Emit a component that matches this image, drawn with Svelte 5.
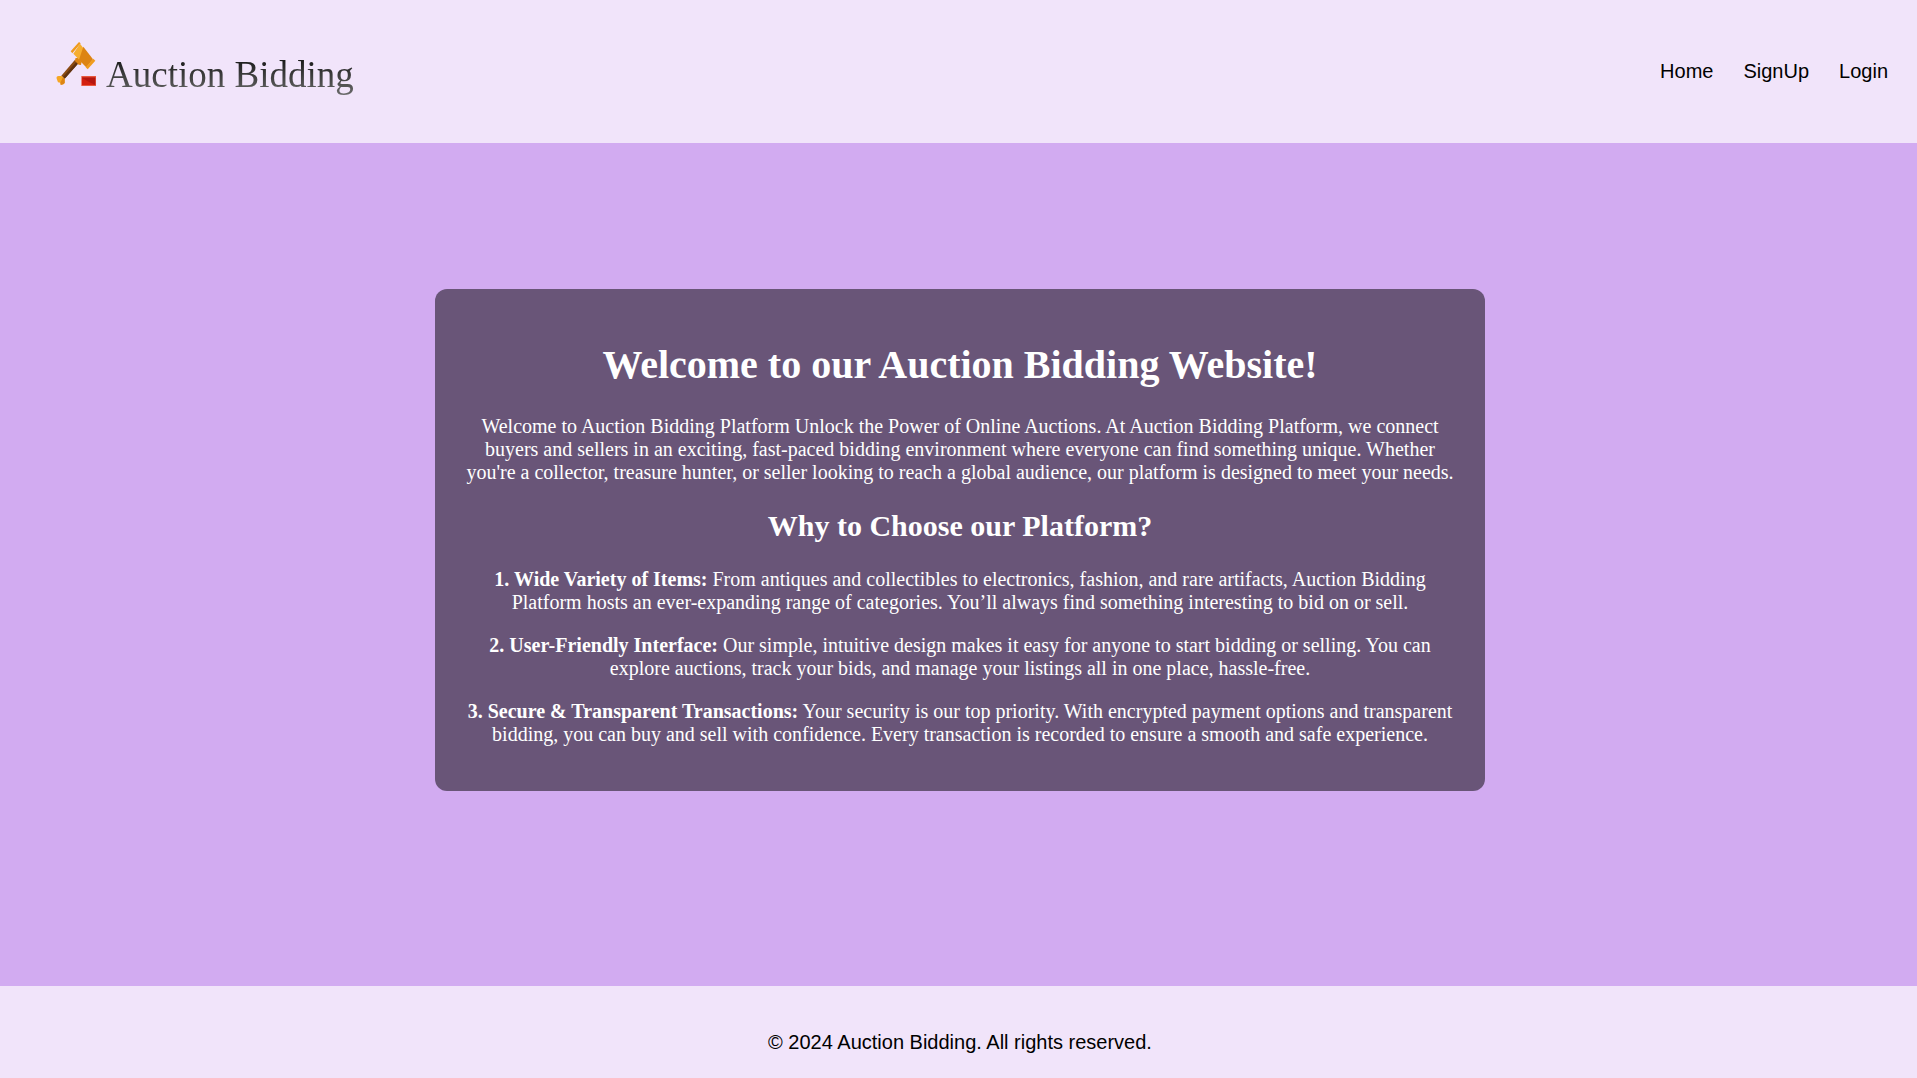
<script>
  const links = [
    { label: 'Home', href: '#home' },
    { label: 'SignUp', href: '#signup' },
    { label: 'Login', href: '#login' }
  ];

  const reasons = [
    {
      title: '1. Wide Variety of Items:',
      text: 'From antiques and collectibles to electronics, fashion, and rare artifacts, Auction Bidding Platform hosts an ever-expanding range of categories. You’ll always find something interesting to bid on or sell.'
    },
    {
      title: '2. User-Friendly Interface:',
      text: 'Our simple, intuitive design makes it easy for anyone to start bidding or selling. You can explore auctions, track your bids, and manage your listings all in one place, hassle-free.'
    },
    {
      title: '3. Secure & Transparent Transactions:',
      text: 'Your security is our top priority. With encrypted payment options and transparent bidding, you can buy and sell with confidence. Every transaction is recorded to ensure a smooth and safe experience.'
    }
  ];
</script>

<div class="page">
  <header>
    <a class="brand" href="#home">
      <svg class="gavel" viewBox="0 0 168 168" aria-hidden="true">
        <path d="M75 68 L86 78 L44 125 L34 116 Z" fill="#8a4a12" />
        <path d="M81 73 L86 78 L44 125 L39 120 Z" fill="#5f3210" />
        <path d="M20 125 Q18 118 26 117 L35 117 L44 126 L44 138 Q40 144 32 143 L31 137 L24 136 Z" fill="#f6a623" />
        <path d="M39 121 L44 126 L44 138 Q40 144 32 143 L31 137 Z" fill="#dd8413" />
        <path d="M76 64 L84 62 L95 74 L93 84 L86 83 L75 72 Z" fill="#dd8413" />
        <path d="M90 20 L126 67 L109 91 L70 50 Z" fill="#f6ae2f" />
        <path d="M100 29 L129 67 L109 91 L87 68 Z" fill="#dd8413" />
        <path d="M87 15 L92 19 L67 49 L62 43 Z" fill="#ee9a1c" />
        <path d="M130 65 L136 71 L113 97 L107 91 Z" fill="#f09c1d" />
        <path d="M94 117 H138 V147 H94 Z" fill="#e8583f" />
        <path d="M96 121 H136 V144 H96 Z" fill="#b5170f" />
        <path d="M96 123 L116 134 L136 144 H96 Z" fill="#d4200f" />
      </svg>
      <span class="wordmark">Auction Bidding</span>
    </a>
    <nav>
      {#each links as link}
        <a href={link.href}>{link.label}</a>
      {/each}
    </nav>
  </header>

  <main>
    <section class="card">
      <h1>Welcome to our Auction Bidding Website!</h1>
      <p>
        Welcome to Auction Bidding Platform Unlock the Power of Online Auctions. At Auction Bidding
        Platform, we connect buyers and sellers in an exciting, fast-paced bidding environment where
        everyone can find something unique. Whether you're a collector, treasure hunter, or seller
        looking to reach a global audience, our platform is designed to meet your needs.
      </p>
      <h2>Why to Choose our Platform?</h2>
      {#each reasons as reason}
        <p><strong>{reason.title}</strong> {reason.text}</p>
      {/each}
    </section>
  </main>

  <footer>
    <p>© 2024 Auction Bidding. All rights reserved.</p>
  </footer>
</div>

<style>
  .page {
    display: flex;
    flex-direction: column;
    min-height: 100vh;
    background: #d2abf1;
    font-family: 'Liberation Sans', Arial, sans-serif;
    font-size: 20px;
    line-height: 23px;
    color: #000;
  }

  header {
    display: flex;
    align-items: center;
    justify-content: space-between;
    padding: 37px 29px 47px 50px;
    background: #f1e4fa;
  }

  a {
    color: inherit;
    text-decoration: none;
  }

  .brand {
    display: flex;
    align-items: flex-start;
  }

  .gavel {
    width: 56px;
    height: 56px;
  }

  .wordmark {
    padding-top: 17px;
    font-family: 'Liberation Serif', 'Times New Roman', serif;
    font-size: 37px;
    line-height: 42px;
    background: linear-gradient(#1c1c1c 40%, #6c6c6c);
    background-clip: text;
    color: transparent;
  }

  nav {
    display: flex;
    gap: 30px;
    padding-top: 9px;
  }

  main {
    flex: 1;
    padding: 146px 24px 195px 27px;
  }

  .card {
    box-sizing: border-box;
    max-width: 1050px;
    margin: 0 auto;
    padding: 26px 30px 25px;
    border-radius: 12px;
    background: rgba(0, 0, 0, 0.5);
    color: #fff;
    font-family: 'Liberation Serif', 'Times New Roman', serif;
    text-align: center;
    display: flow-root;
  }

  h1 {
    margin: 27px 0;
    font-size: 40px;
    line-height: 46px;
  }

  h2 {
    margin: 25px 0;
    font-size: 30px;
    line-height: 34px;
  }

  .card p {
    margin: 20px 0;
  }

  footer {
    padding: 45px 24px 24px 27px;
    background: #f1e4fa;
    text-align: center;
  }

  footer p {
    margin: 0;
  }
</style>
